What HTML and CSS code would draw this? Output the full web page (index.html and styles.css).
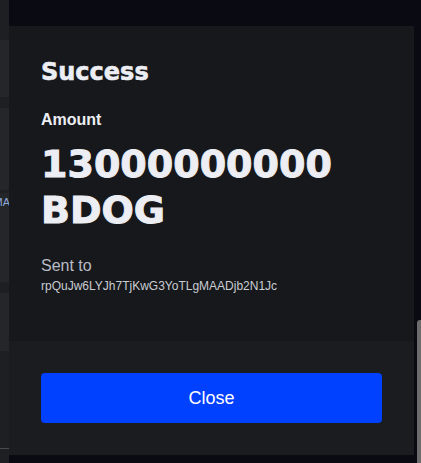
FILE: index.html
```html
<!DOCTYPE html>
<html>
<head>
    <title>Success</title>
    <link rel="stylesheet" href="styles.css">
</head>
<body>
<div class="page">
    <div class="sidebar">
        <div class="side-row dark" style="height:40px"></div>
        <div class="side-row" style="height:57px"></div>
        <div class="side-row dark" style="height:11px"></div>
        <div class="side-row" style="height:82px"></div>
        <div class="side-row dark" style="height:3px"></div>
        <div class="side-row" style="height:89px"><span class="side-text">rpQuJw6LYJh7TjKwG3YoTLgMA</span></div>
        <div class="side-row dark" style="height:11px"></div>
        <div class="side-row" style="height:58px"></div>
        <div class="side-row dark side-last" style="height:97px"></div>
    </div>

    <div class="overlay">
        <div class="modal">
            <div class="modal-body">
                <h2 class="title">Success</h2>
                <div class="label">Amount</div>
                <div class="amount">13000000000 BDOG</div>
                <div class="sent">Sent to</div>
                <div class="address">rpQuJw6LYJh7TjKwG3YoTLgMAADjb2N1Jc</div>
            </div>
            <div class="modal-footer">
                <button type="button" class="close-btn">Close</button>
            </div>
        </div>
    </div>

    <div class="scroll-thumb"></div>
</div>
</body>
</html>
```

FILE: styles.css
```css
body {
    margin: 0;
    background-color: #0a0a13;
    font-family: "Liberation Sans", Arial, sans-serif;
}

.page {
    position: relative;
    display: flex;
    height: 463px;
    overflow: hidden;
}

.sidebar {
    width: 9px;
    flex-shrink: 0;
    display: flex;
    flex-direction: column;
    background-color: #1e1f23;
    overflow: hidden;
}

.side-row {
    background-color: #25262a;
    position: relative;
    flex-shrink: 0;
}

.side-row.dark {
    background-color: #1e1f23;
}

.side-last {
    border-bottom: 1px solid #4a4b52;
}

.side-text {
    position: absolute;
    top: 3px;
    right: -1px;
    font-size: 11px;
    color: #8ea8d8;
    white-space: nowrap;
}

.overlay {
    flex: 1;
    padding: 26px 7px 8px 0;
}

.modal {
    display: flex;
    flex-direction: column;
    height: 429px;
}

.modal-body {
    background-color: #17181b;
    padding: 32px 32px 0 32px;
    height: 283px;
}

.title {
    margin: 0 0 24px 0;
    font-family: "DejaVu Sans", sans-serif;
    font-weight: bold;
    font-size: 24px;
    line-height: 28px;
    color: #eceef3;
    -webkit-text-stroke: 0.6px #eceef3;
}

.label {
    font-weight: bold;
    font-size: 16px;
    line-height: 20px;
    color: #eceef3;
}

.amount {
    margin-top: 11px;
    font-family: "DejaVu Sans", sans-serif;
    font-weight: bold;
    font-size: 38px;
    line-height: 46px;
    color: #eceef3;
    -webkit-text-stroke: 1px #eceef3;
}

.sent {
    margin-top: 23px;
    font-size: 16px;
    line-height: 20px;
    color: #b9bdc6;
}

.address {
    margin-top: 2px;
    font-size: 12px;
    line-height: 16px;
    color: #c9cdd4;
}

.modal-footer {
    flex: 1;
    background-color: #1b1c20;
    padding: 32px;
}

.close-btn {
    width: 100%;
    height: 50px;
    border: none;
    border-radius: 4px;
    background-color: #0040ff;
    color: #ffffff;
    font-family: "Liberation Sans", Arial, sans-serif;
    font-size: 18px;
}

.scroll-thumb {
    position: absolute;
    left: 417px;
    top: 320px;
    width: 6px;
    height: 160px;
    border-radius: 3px;
    background-color: #6c6c6c;
}
```
